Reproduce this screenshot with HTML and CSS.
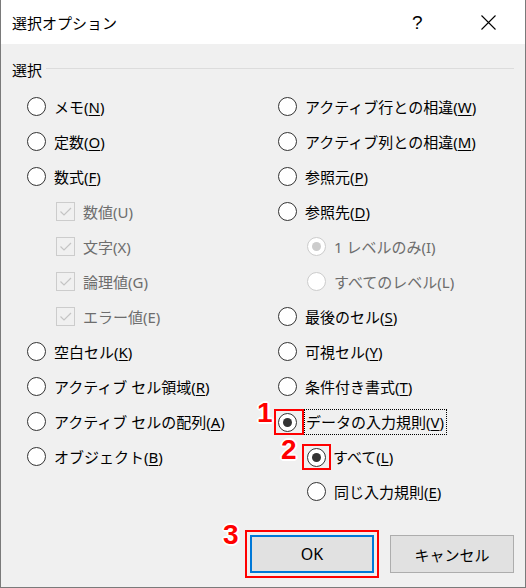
FILE: index.html
```html
<!DOCTYPE html>
<html lang="ja">
<head>
<meta charset="utf-8">
<title>選択オプション</title>
<link rel="stylesheet" href="styles.css">
</head>
<body>
<div class="window">
  <div class="titlebar">
    <span class="title">選択オプション</span>
    <span class="help">?</span>
    <span class="close"><svg width="15" height="15" viewBox="0 0 15 15"><path d="M0.5 0.5L14.5 14.5M14.5 0.5L0.5 14.5" stroke="#000" stroke-width="1.1" fill="none"/></svg></span>
  </div>
  <div class="content">
    <div class="legend"><span class="legend-text">選択</span><span class="legend-line"></span></div>
    <div class="cols">
      <div class="col">
        <div class="opt"><span class="radio"></span><span class="lbl">メモ(<u>N</u>)</span></div>
        <div class="opt"><span class="radio"></span><span class="lbl">定数(<u>O</u>)</span></div>
        <div class="opt"><span class="radio"></span><span class="lbl">数式(<u>F</u>)</span></div>
        <div class="opt sub off"><span class="check"><svg width="17" height="17" viewBox="0 0 17 17"><path d="M3.5 8.5L7 12L14 5" stroke="#c4c4c4" stroke-width="1.2" fill="none"/></svg></span><span class="lbl">数値(U)</span></div>
        <div class="opt sub off"><span class="check"><svg width="17" height="17" viewBox="0 0 17 17"><path d="M3.5 8.5L7 12L14 5" stroke="#c4c4c4" stroke-width="1.2" fill="none"/></svg></span><span class="lbl">文字(X)</span></div>
        <div class="opt sub off"><span class="check"><svg width="17" height="17" viewBox="0 0 17 17"><path d="M3.5 8.5L7 12L14 5" stroke="#c4c4c4" stroke-width="1.2" fill="none"/></svg></span><span class="lbl">論理値(G)</span></div>
        <div class="opt sub off"><span class="check"><svg width="17" height="17" viewBox="0 0 17 17"><path d="M3.5 8.5L7 12L14 5" stroke="#c4c4c4" stroke-width="1.2" fill="none"/></svg></span><span class="lbl">エラー値(E)</span></div>
        <div class="opt"><span class="radio"></span><span class="lbl">空白セル(<u>K</u>)</span></div>
        <div class="opt"><span class="radio"></span><span class="lbl">アクティブ セル領域(<u>R</u>)</span></div>
        <div class="opt"><span class="radio"></span><span class="lbl">アクティブ セルの配列(<u>A</u>)</span></div>
        <div class="opt"><span class="radio"></span><span class="lbl">オブジェクト(<u>B</u>)</span></div>
      </div>
      <div class="col">
        <div class="opt"><span class="radio"></span><span class="lbl">アクティブ行との相違(<u>W</u>)</span></div>
        <div class="opt"><span class="radio"></span><span class="lbl">アクティブ列との相違(<u>M</u>)</span></div>
        <div class="opt"><span class="radio"></span><span class="lbl">参照元(<u>P</u>)</span></div>
        <div class="opt"><span class="radio"></span><span class="lbl">参照先(<u>D</u>)</span></div>
        <div class="opt sub off"><span class="radio on"></span><span class="lbl">1 レベルのみ(I)</span></div>
        <div class="opt sub off"><span class="radio"></span><span class="lbl">すべてのレベル(L)</span></div>
        <div class="opt"><span class="radio"></span><span class="lbl">最後のセル(<u>S</u>)</span></div>
        <div class="opt"><span class="radio"></span><span class="lbl">可視セル(<u>Y</u>)</span></div>
        <div class="opt"><span class="radio"></span><span class="lbl">条件付き書式(<u>T</u>)</span></div>
        <div class="opt tight"><span class="mark mark1"><span class="radio on"></span></span><span class="lbl focus">データの入力規則(<u>V</u>)</span></div>
        <div class="opt sub tight2"><span class="mark mark2"><span class="radio on"></span></span><span class="lbl">すべて(<u>L</u>)</span></div>
        <div class="opt sub"><span class="radio"></span><span class="lbl">同じ入力規則(<u>E</u>)</span></div>
      </div>
    </div>
    <div class="buttons">
      <button class="btn ok">OK</button>
      <button class="btn">キャンセル</button>
    </div>
  </div>
  <span class="num n1">1</span>
  <span class="num n2">2</span>
  <span class="num n3">3</span>
</div>
</body>
</html>
```

FILE: styles.css
```css
* { box-sizing: border-box; }
html, body { margin: 0; padding: 0; }
body {
  width: 526px;
  height: 588px;
  overflow: hidden;
  font-family: "Noto Sans", "Noto Sans CJK JP", sans-serif;
  font-size: 15px;
  color: #000;
}
.window {
  position: relative;
  width: 526px;
  height: 588px;
  background: #f0f0f0;
  border: 1px solid #7a7a7a;
  border-top: none;
  display: flex;
  flex-direction: column;
}
.titlebar {
  height: 44px;
  background: #fff;
  display: flex;
  align-items: center;
  padding: 0 0 0 11px;
  flex: none;
}
.title {
  flex: 1;
  font-size: 15px;
  line-height: 20px;
  padding-top: 1px;
}
.help {
  font-family: "Liberation Sans", sans-serif;
  font-size: 19px;
  line-height: 20px;
  width: 20px;
  margin-right: 49px;
  padding-top: 1px;
}
.close {
  width: 15px;
  height: 15px;
  margin-right: 29px;
  display: flex;
  margin-top: 1px;
}
.content {
  flex: 1;
  padding: 16px 11px 0 11px;
  display: flex;
  flex-direction: column;
}
.legend {
  display: flex;
  align-items: center;
  height: 20px;
}
.legend-text {
  line-height: 20px;
  padding-right: 4px;
}
.legend-line {
  flex: 1;
  height: 1px;
  background: #dcdcdc;
  margin-bottom: 4px;
}
.cols {
  display: flex;
  margin-top: 9px;
  padding-left: 15px;
}
.col {
  display: flex;
  flex-direction: column;
}
.col:first-child { width: 251px; }
.opt {
  height: 35px;
  display: flex;
  align-items: center;
  gap: 8px;
}
.opt.sub { padding-left: 29px; }
.opt.off .lbl { color: #6d6d6d; }
.lbl {
  line-height: 24px;
  white-space: nowrap;
}
.lbl u {
  text-decoration-thickness: 1px;
  text-underline-offset: 2px;
}
.radio {
  width: 19px;
  height: 19px;
  border: 1px solid #333;
  border-radius: 50%;
  background: #fff;
  display: flex;
  align-items: center;
  justify-content: center;
  flex: none;
}
.radio.on::after {
  content: "";
  width: 9px;
  height: 9px;
  border-radius: 50%;
  background: #333;
}
.off .radio { border-color: #cccccc; }
.off .radio.on::after { background: #cccccc; }
.check {
  width: 19px;
  height: 19px;
  border: 1px solid #cccccc;
  background: #f0f0f0;
  display: flex;
  flex: none;
}
.check svg { display: block; }
.opt.tight { gap: 0; }
.opt.tight2 { gap: 2px; }
.mark {
  border: 2px solid #ff0000;
  display: flex;
  flex: none;
}
.mark1 {
  padding: 2px 5px 1px 2px;
  margin-left: -4px;
}
.mark2 {
  padding: 2px 3px 1px 3px;
  margin-left: -5px;
}
.focus {
  border: 1px dotted #000;
  padding: 0 2px 0 1px;
  line-height: 24px;
}
.buttons {
  display: flex;
  justify-content: flex-end;
  gap: 16px;
  margin-top: 26px;
}
.btn {
  width: 124px;
  height: 38px;
  background: #e1e1e1;
  border: 1px solid #adadad;
  font-family: "Noto Sans", "Noto Sans CJK JP", sans-serif;
  font-size: 15px;
  color: #000;
  padding: 0;
  margin: 0;
}
.btn.ok {
  font-size: 16px;
  border: 2px solid #0078d7;
  outline: 2px solid #ff0000;
  outline-offset: 3px;
}
.num {
  position: absolute;
  font-family: "Liberation Sans", sans-serif;
  font-weight: bold;
  font-size: 28px;
  line-height: 28px;
  color: #ff0000;
  text-shadow: -2px 0 #fff, 2px 0 #fff, 0 -2px #fff, 0 2px #fff, -1px -1px #fff, 1px 1px #fff, -1px 1px #fff, 1px -1px #fff;
}
.n1 { left: 256px; top: 399px; }
.n2 { left: 280px; top: 436px; }
.n3 { left: 222px; top: 521px; }
```
